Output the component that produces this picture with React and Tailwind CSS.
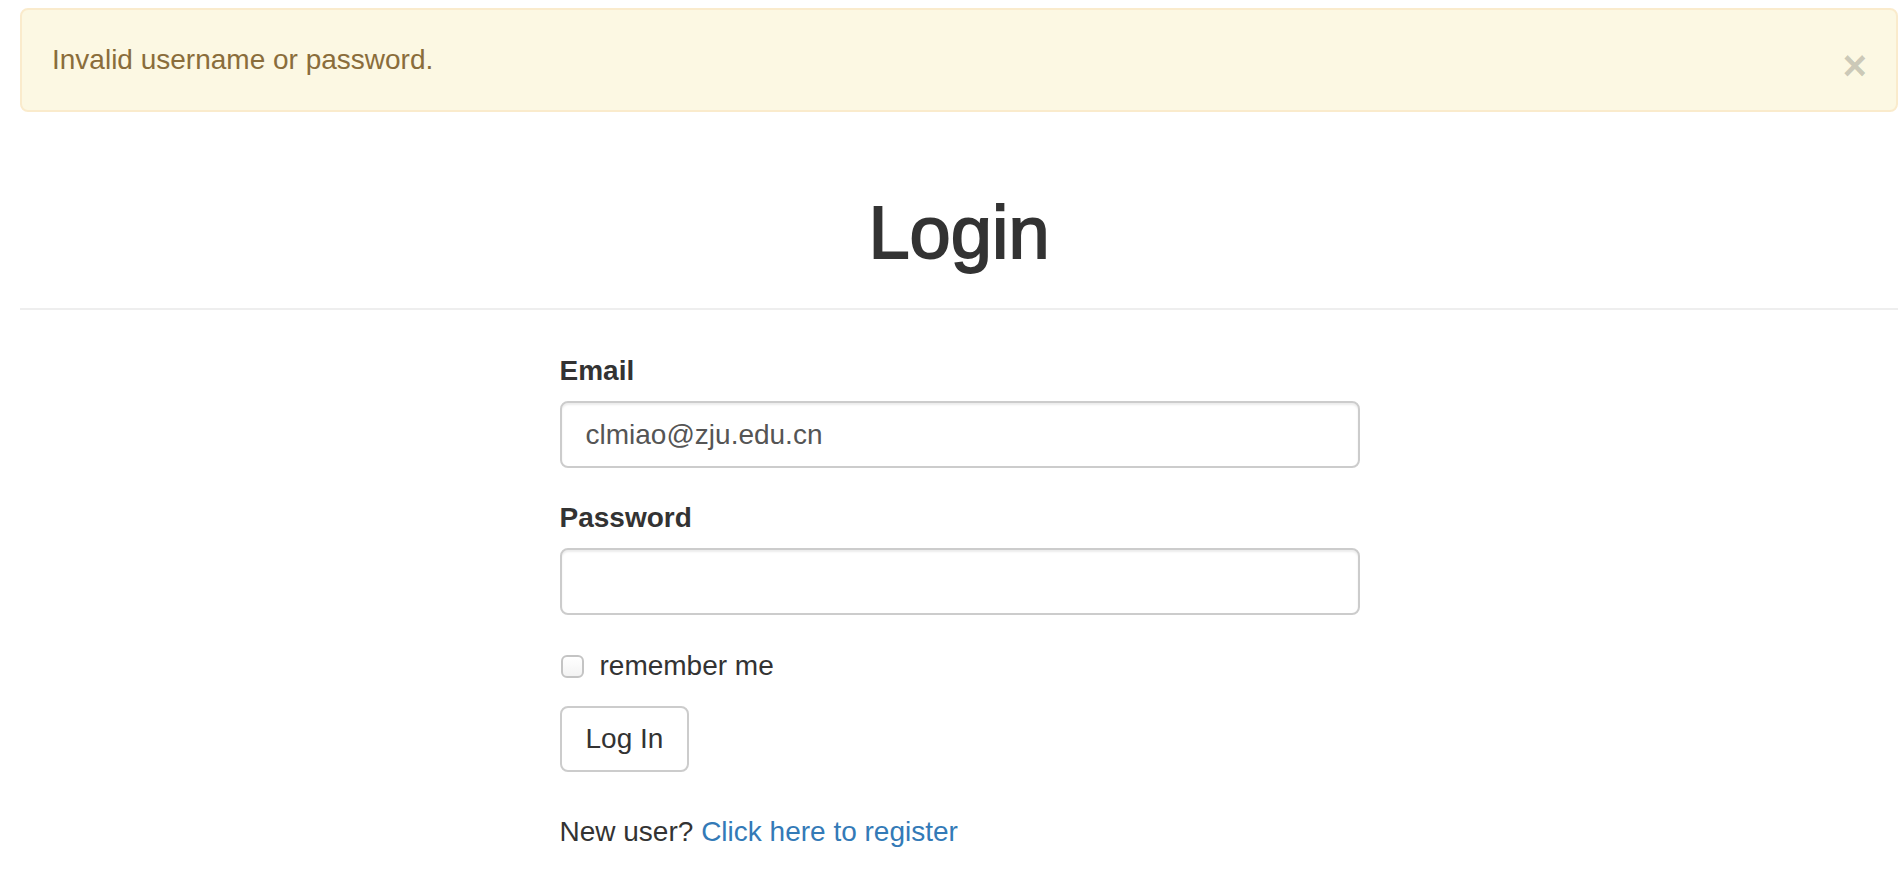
import React from 'react';

const App = () => {
  return (
    <div className="min-h-screen bg-white pl-[20px] pt-[8px] text-[28px] text-[#333] font-['Liberation_Sans',Arial,sans-serif]">
      {/* Alert */}
      <div className="flex h-[104px] items-center justify-between rounded-[8px] border-2 border-[#faebcc] bg-[#fcf8e3] pl-[30px] pr-[29px] text-[#8a6d3b]">
        <span className="leading-[40px]">Invalid username or password.</span>
        <span className="mt-[11px] text-[42px] font-bold leading-none text-black/20">×</span>
      </div>

      {/* Page header */}
      <div className="mt-[81px] border-b-2 border-[#eee] pb-[35px]">
        <h1 className="text-center text-[74px] leading-[80px] [-webkit-text-stroke:1.8px_#333]">Login</h1>
      </div>

      {/* Form */}
      <div className="pl-[1px]">
        <form className="mx-auto mt-[41px] w-[800px]" onSubmit={(e) => e.preventDefault()}>
          <div>
            <label className="block font-bold leading-[40px]">Email</label>
            <input
              type="text"
              defaultValue="clmiao@zju.edu.cn"
              className="mt-[10px] block h-[67px] w-full rounded-[8px] border-2 border-[#ccc] px-[24px] text-[#555] shadow-[inset_0_2px_2px_rgba(0,0,0,0.075)] outline-none"
            />
          </div>

          <div className="mt-[30px]">
            <label className="block font-bold leading-[40px]">Password</label>
            <input
              type="password"
              className="mt-[10px] block h-[67px] w-full rounded-[8px] border-2 border-[#ccc] px-[24px] text-[#555] shadow-[inset_0_2px_2px_rgba(0,0,0,0.075)] outline-none"
            />
          </div>

          <label className="mt-[31px] flex items-center leading-[40px]">
            <span className="ml-[1px] h-[23px] w-[23px] rounded-[6px] border-2 border-[#c4c4c4] bg-gradient-to-b from-white to-[#f3f3f3]" />
            <span className="ml-[16px]">remember me</span>
          </label>

          <button
            type="submit"
            className="mt-[20px] block h-[66px] rounded-[8px] border-2 border-[#ccc] bg-white px-[24px] leading-[40px] text-[#333]"
          >
            Log In
          </button>

          <p className="mt-[40px] leading-[40px]">
            New user? <a href="#" className="text-[#337ab7]">Click here to register</a>
          </p>
        </form>
      </div>
    </div>
  );
};

export default App;
